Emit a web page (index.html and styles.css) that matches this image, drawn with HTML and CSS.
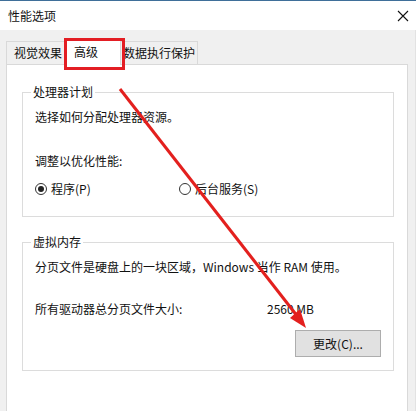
FILE: index.html
```html
<!DOCTYPE html>
<html lang="zh-CN">
<head>
<meta charset="utf-8">
<title>性能选项</title>
<link rel="stylesheet" href="styles.css">
</head>
<body>
<div class="window">
  <div class="titlebar">
    <span class="title">性能选项</span>
    <svg class="close" width="12" height="12" viewBox="0 0 12 12"><path d="M1 1 L11 11 M11 1 L1 11" stroke="#111" stroke-width="1.1" fill="none"/></svg>
  </div>
  <div class="body">
    <div class="tabs">
      <div class="tab tab-first">视觉效果</div>
      <div class="tab tab-active">高级</div>
      <div class="tab tab-last">数据执行保护</div>
    </div>
    <div class="panel">
      <fieldset class="group group-cpu">
        <legend>处理器计划</legend>
        <p class="line">选择如何分配处理器资源。</p>
        <p class="line line-adjust">调整以优化性能:</p>
        <div class="radios">
          <label class="radio"><span class="dot checked"></span>程序(P)</label>
          <label class="radio"><span class="dot"></span>后台服务(S)</label>
        </div>
      </fieldset>
      <fieldset class="group group-mem">
        <legend>虚拟内存</legend>
        <p class="line">分页文件是硬盘上的一块区域，Windows 当作 RAM 使用。</p>
        <div class="size-row"><span>所有驱动器总分页文件大小:</span><span>2560 MB</span></div>
        <div class="btn-row"><button class="btn">更改(C)...</button></div>
      </fieldset>
    </div>
  </div>
  <div class="highlight"></div>
  <svg class="arrow" width="416" height="411" viewBox="0 0 416 411">
    <line x1="120" y1="89" x2="298" y2="317" stroke="#e3201e" stroke-width="3"/>
    <polygon points="306,328 290,318 300,309" fill="#e3201e"/>
  </svg>
</div>
</body>
</html>
```
FILE: styles.css
```css
* { box-sizing: border-box; }
html, body { margin: 0; padding: 0; }
body {
  width: 416px;
  height: 411px;
  overflow: hidden;
  background: #f0f0f0;
  font-family: "Noto Sans CJK SC", "Microsoft YaHei", sans-serif;
  font-size: 12px;
  line-height: 16px;
  color: #111;
}
.window { position: relative; width: 416px; height: 411px; }
.titlebar {
  height: 30px;
  background: #fff;
  border-top: 1px solid #3f6f99;
  display: flex;
  align-items: center;
  justify-content: space-between;
  padding: 0 7px 0 8px;
}
.title { font-size: 12px; }
.close { display: block; margin-top: 1px; }
.body {
  padding: 11px 7px 0 6px;
  border-right: 1px solid #e2e2e2;
  height: 381px;
}
.tabs { display: flex; height: 23px; align-items: flex-end; }
.tab {
  height: 23px;
  border: 1px solid #d9d9d9;
  border-bottom: none;
  background: #f0f0f0;
  display: flex;
  align-items: center;
}
.tab-first { width: 58px; padding-left: 7px; border-right: none; }
.tab-active {
  width: 57px;
  height: 25px;
  background: #fff;
  padding-left: 9px;
  padding-bottom: 2px;
  position: relative;
  z-index: 1;
  margin-bottom: -1px;
  height: 26px;
}
.tab-last { width: 77px; padding-left: 2px; border-left: none; }
.panel {
  background: #fff;
  border: 1px solid #d9d9d9;
  height: 360px;
  padding: 19px 13px 0 15px;
}
.group {
  margin: 0;
  border: 1px solid #dcdcdc;
  padding: 0 12px 0 12px;
  min-width: 0;
}
.group legend {
  padding: 0 2px;
  margin-left: -4px;
  line-height: 16px;
}
.line { margin: 9px 0 0; }
.line-adjust { margin-top: 28px; }
.group-cpu { padding-bottom: 19px; }
.radios { display: flex; margin-top: 12px; }
.radio { display: flex; align-items: center; width: 144px; }
.dot {
  width: 12px;
  height: 12px;
  border: 1px solid #333;
  border-radius: 50%;
  margin-right: 4px;
  display: flex;
  align-items: center;
  justify-content: center;
  background: #fff;
}
.dot.checked::after {
  content: "";
  width: 6px;
  height: 6px;
  border-radius: 50%;
  background: #222;
}
.group-mem { margin-top: 17px; padding-bottom: 13px; }
.size-row { display: grid; grid-template-columns: 232px auto; margin-top: 26px; }
.btn-row { display: flex; justify-content: flex-end; margin-top: 13px; }
.btn {
  width: 86px;
  height: 27px;
  background: #e1e1e1;
  border: 1px solid #adadad;
  font-family: inherit;
  font-size: 12px;
  color: #111;
  padding: 0;
}
.highlight {
  position: absolute;
  left: 64px;
  top: 38px;
  width: 61px;
  height: 32px;
  border: 3px solid #e31e24;
  z-index: 2;
}
.arrow { position: absolute; left: 0; top: 0; z-index: 3; }
```
